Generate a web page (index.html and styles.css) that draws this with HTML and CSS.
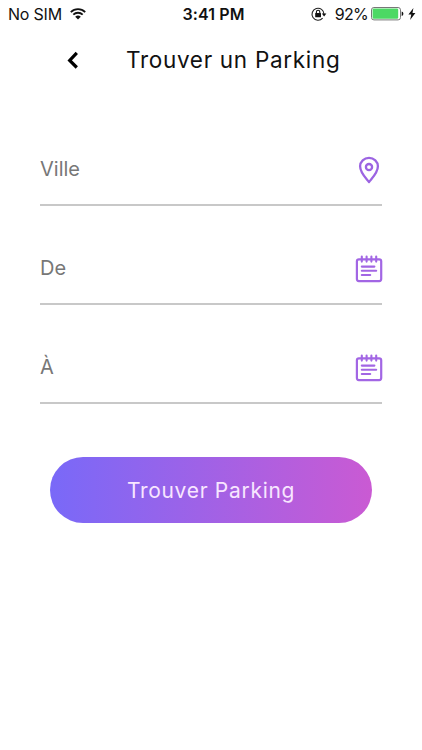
FILE: index.html
```html
<!DOCTYPE html>
<html lang="fr">
    <head>
        <meta charset="utf-8">
        <meta name="viewport" content="width=device-width, initial-scale=1">
        <title>Trouver un Parking</title>
        <link rel="stylesheet" href="styles.css">
    </head>
    <body>
        <div class="status-bar">
            <div class="status-left">
                <span class="carrier">No SIM</span>
                <svg class="wifi" width="16" height="12" viewBox="0 0 16 12">
                    <path d="M.8 4.1a10.3 10.3 0 0 1 14.4 0M3.3 6.7a6.6 6.6 0 0 1 9.4 0" fill="none" stroke="#111" stroke-width="1.8"/>
                    <path d="M5.2 8.8a4 4 0 0 1 5.6 0L8 11.6z" fill="#111"/>
                </svg>
            </div>
            <div class="status-time">3:41 PM</div>
            <div class="status-right">
                <svg class="lock" width="16" height="14" viewBox="0 0 16 14">
                    <path d="M11.6 11.1A6 6 0 1 1 13 7.2" fill="none" stroke="#222" stroke-width="1.1"/>
                    <path d="M10.8 6.6h4.6L13.1 9.4z" fill="#111"/>
                    <rect x="4.2" y="6.1" width="5.8" height="4.2" rx=".5" fill="#111"/>
                    <path d="M5.4 6.4V5a1.7 1.7 0 0 1 3.4 0v1.4" fill="none" stroke="#111" stroke-width="1.1"/>
                </svg>
                <span class="percent">92%</span>
                <svg class="battery" width="33" height="14" viewBox="0 0 33 14">
                    <rect x=".5" y=".5" width="29" height="12.4" rx="2.4" fill="#fff" stroke="#777"/>
                    <rect x="1.6" y="1.6" width="25.6" height="10.2" rx="1.2" fill="#4cd964"/>
                    <path d="M30.7 4.4q1.7.5 1.7 2.3t-1.7 2.3z" fill="#111"/>
                </svg>
                <svg class="bolt" width="8" height="12" viewBox="0 0 8 12">
                    <path d="M5.4 0L.4 6.5h2.9L2.1 12l5.3-7H4.5z" fill="#111"/>
                </svg>
            </div>
        </div>
        <header class="header">
            <svg class="back" width="12" height="18" viewBox="0 0 12 18">
                <path d="M9.8 1.9L2.7 9.4l7.1 7.1" fill="none" stroke="#000" stroke-width="3.2"/>
            </svg>
            <h1 class="title">Trouver un Parking</h1>
        </header>
        <form class="form">
            <div class="field">
                <span class="label">Ville</span>
                <svg class="icon" width="28" height="28" viewBox="0 0 28 28">
                    <g fill="none" stroke="#9c64e2" stroke-width="2.3">
                        <path d="M14 26C11.2 22.4 5.1 17 5.1 10.3a8.9 8.4 0 0 1 17.8 0C22.9 17 16.8 22.4 14 26z" stroke-linejoin="round"/>
                        <circle cx="14" cy="11.1" r="3.1"/>
                    </g>
                </svg>
            </div>
            <div class="field">
                <span class="label">De</span>
                <svg class="icon" width="28" height="28" viewBox="0 0 28 28">
                    <g fill="none" stroke="#a266e4" stroke-width="2.2" stroke-linecap="round">
                        <rect x="1.9" y="4.3" width="24.3" height="21.8" rx="2"/>
                        <path d="M6.8 1.6v5M11.6 1.6v5M16.4 1.6v5M21.2 1.6v5" stroke-width="2.1"/>
                        <path d="M6.8 11.6h12.6M6.8 15.8h14.4M6.8 20h8.4" stroke-width="2.1"/>
                    </g>
                </svg>
            </div>
            <div class="field">
                <span class="label">À</span>
                <svg class="icon" width="28" height="28" viewBox="0 0 28 28">
                    <g fill="none" stroke="#a266e4" stroke-width="2.2" stroke-linecap="round">
                        <rect x="1.9" y="4.3" width="24.3" height="21.8" rx="2"/>
                        <path d="M6.8 1.6v5M11.6 1.6v5M16.4 1.6v5M21.2 1.6v5" stroke-width="2.1"/>
                        <path d="M6.8 11.6h12.6M6.8 15.8h14.4M6.8 20h8.4" stroke-width="2.1"/>
                    </g>
                </svg>
            </div>
            <button class="submit" type="button">Trouver Parking</button>
        </form>
    </body>
</html>
```
FILE: styles.css
```css
* {
    box-sizing: border-box;
}

html, body {
    padding: 0;
    margin: 0;
}

body {
    background: #FFF;
    color: #111;
    font-family: Inter, 'Liberation Sans', sans-serif;
    min-height: 100vh;
}

svg {
    display: block;
    flex: none;
    overflow: visible;
}

/* Status bar */

.status-bar {
    display: grid;
    grid-template-columns: 1fr auto 1fr;
    align-items: center;
    height: 28px;
    padding: 0 6px 0 8px;
    font-size: 16px;
    line-height: 28px;
}

.status-left, .status-right {
    display: flex;
    align-items: center;
}

.status-right {
    justify-content: flex-end;
}

.carrier {
    letter-spacing: -0.2px;
}

.wifi {
    margin-left: 8px;
}

.status-time {
    padding-left: 3px;
    font-weight: 600;
    letter-spacing: 0.1px;
}

.percent {
    margin: 0 3px 0 8px;
    letter-spacing: -0.7px;
}

.bolt {
    margin-left: 4px;
}

/* Header */

.header {
    display: flex;
    align-items: center;
    height: 64px;
    padding: 0 0 0 67px;
}

.title {
    margin: 0 0 0 47px;
    color: #111;
    font-size: 22.5px;
    font-weight: 400;
    letter-spacing: 0.7px;
    line-height: 32px;
    white-space: nowrap;
}

/* Form */

.form {
    padding: 43px 40px 0;
}

.field {
    display: flex;
    align-items: center;
    justify-content: space-between;
    height: 71px;
    margin-bottom: 28px;
    border-bottom: 2px solid #C8C8C8;
}

.label {
    padding-bottom: 1px;
    color: #777;
    font-size: 20px;
    line-height: 28px;
}

.icon {
    margin-right: -1px;
}

.submit {
    display: block;
    width: 322px;
    height: 66px;
    margin: 53px 0 0 10px;
    padding: 0;
    border: 0;
    border-radius: 33px;
    background: linear-gradient(90deg, #7969F8, #CA5AD3);
    color: #F8E6FF;
    font-family: inherit;
    font-size: 21px;
    font-weight: 400;
    letter-spacing: 0.7px;
}
```
